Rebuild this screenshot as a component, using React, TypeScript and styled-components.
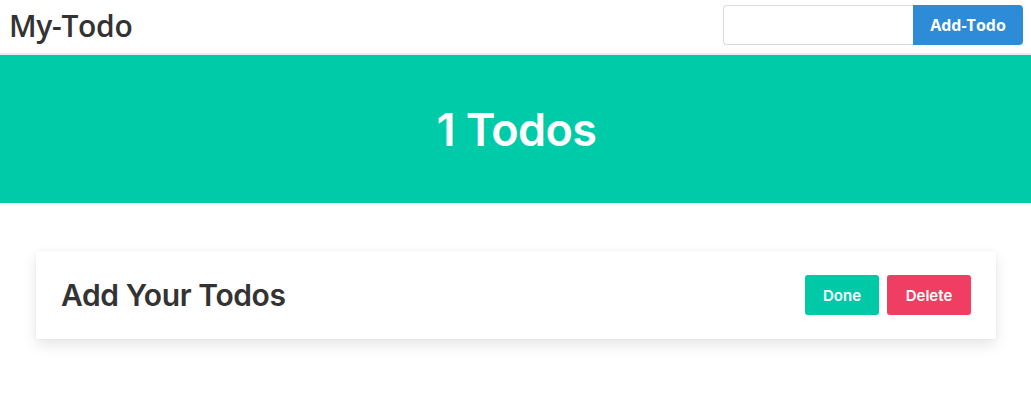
import React from "react";
import styled, {createGlobalStyle} from "styled-components";

const GlobalStyle = createGlobalStyle`
  body {
    margin: 0;
    background: #fff;
    font-family: "Inter", "Open Sans", sans-serif;
    color: #363636;
  }
`;

const Nav = styled.nav`
  display: flex;
  align-items: center;
  justify-content: space-between;
  height: 55px;
  padding: 0 8px 0 9px;
  border-bottom: 2px solid #ececec;
  box-sizing: border-box;
`;

const Brand = styled.h1`
  margin: 0 0 2px;
  font-family: "Open Sans", sans-serif;
  font-size: 30px;
  font-weight: 600;
  color: #333;
  letter-spacing: -0.3px;
`;

const AddForm = styled.form`
  display: flex;
  height: 40px;
  margin-bottom: 4px;
`;

const TodoInput = styled.input`
  width: 190px;
  height: 40px;
  box-sizing: border-box;
  border: 1px solid #dbdbdb;
  border-right: none;
  border-radius: 4px 0 0 4px;
  padding: 0 10px;
  font-size: 16px;
  outline: none;
`;

const AddButton = styled.button`
  width: 110px;
  height: 40px;
  border: none;
  border-radius: 0 4px 4px 0;
  background: #2e8bd8;
  color: #fff;
  font-family: "Open Sans", sans-serif;
  font-size: 16px;
  font-weight: 700;
  cursor: pointer;
`;

const Hero = styled.section`
  display: flex;
  align-items: center;
  justify-content: center;
  height: 148px;
  background: #00cba9;
`;

const HeroTitle = styled.h2`
  margin: 0 0 0 2px;
  font-size: 45px;
  font-weight: 600;
  color: #fff;
  letter-spacing: -0.6px;
`;

const List = styled.main`
  display: flex;
  flex-direction: column;
  padding: 48px 35px 60px 36px;
`;

const Card = styled.div`
  display: flex;
  align-items: center;
  justify-content: space-between;
  height: 88px;
  padding: 0 25px;
  background: #fff;
  box-shadow: 0 6px 14px rgba(10, 10, 10, 0.1), 0 0 0 1px rgba(10, 10, 10, 0.02);
  border-radius: 2px;
`;

const TodoText = styled.span`
  font-size: 30px;
  font-weight: 600;
  color: #333;
  letter-spacing: -0.4px;
`;

const Actions = styled.div`
  display: flex;
  gap: 8px;
`;

const ActionButton = styled.button<{ $color: string; $width: number }>`
  width: ${p => p.$width}px;
  height: 40px;
  border: none;
  border-radius: 3px;
  background: ${p => p.$color};
  color: #fff;
  font-family: "Inter", sans-serif;
  font-size: 15px;
  font-weight: 600;
  cursor: pointer;
`;

const App: React.FC = () => {
    return (
        <>
            <GlobalStyle/>
            <Nav>
                <Brand>My-Todo</Brand>
                <AddForm onSubmit={e => e.preventDefault()}>
                    <TodoInput type="text"/>
                    <AddButton type="submit">Add-Todo</AddButton>
                </AddForm>
            </Nav>
            <Hero>
                <HeroTitle>1 Todos</HeroTitle>
            </Hero>
            <List>
                <Card>
                    <TodoText>Add Your Todos</TodoText>
                    <Actions>
                        <ActionButton $color="#00c9a7" $width={74}>Done</ActionButton>
                        <ActionButton $color="#f03e62" $width={84}>Delete</ActionButton>
                    </Actions>
                </Card>
            </List>
        </>
    );
};

export default App;
